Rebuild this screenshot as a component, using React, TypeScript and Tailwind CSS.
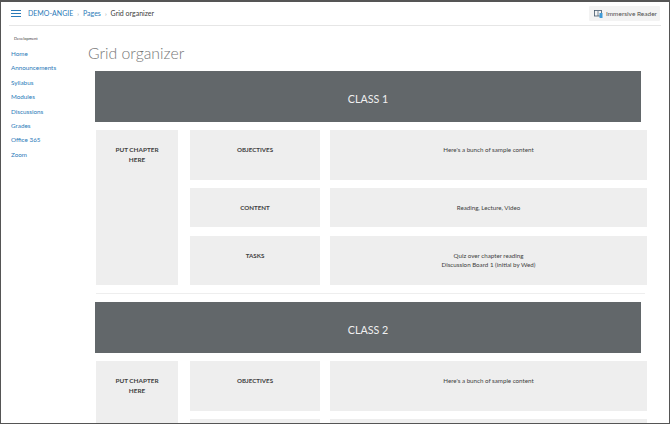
const navItems = ["Home", "Announcements", "Syllabus", "Modules", "Discussions", "Grades", "Office 365", "Zoom"]

function Row({ label, className, children }: { label: string; className: string; children: React.ReactNode }) {
  return (
    <div className={`flex gap-[10px] ${className}`}>
      <div className="w-[130px] bg-[#eeeeee] pt-[15px] text-center text-[6.2px] leading-[10px] font-bold text-[#404040]">{label}</div>
      <div className="w-[317px] bg-[#eeeeee] pt-[15px] text-center text-[6.2px] leading-[9px] text-[#404040]">{children}</div>
    </div>
  )
}

function ClassBlock({ title }: { title: string }) {
  return (
    <div>
      <div className="ml-[1px] flex h-[51px] w-[546px] items-center justify-center bg-[#62676a] pt-[6px] text-[10.7px] text-[#f0f0f0]">{title}</div>
      <div className="mt-[8px] ml-[2px] flex gap-[12px]">
        <div className="h-[155px] w-[82px] bg-[#eeeeee] pt-[15px] text-center text-[6.4px] leading-[10px] font-bold text-[#404040]">
          PUT CHAPTER
          <br />
          HERE
        </div>
        <div className="flex flex-col">
          <Row label="OBJECTIVES" className="h-[50px]">Here's a bunch of sample content</Row>
          <Row label="CONTENT" className="mt-[8px] h-[39px]">Reading, Lecture, Video</Row>
          <Row label="TASKS" className="mt-[9px] h-[49px]">
            <div>Quiz over chapter reading</div>
            <div>Discussion Board 1 (initial by Wed)</div>
          </Row>
        </div>
      </div>
    </div>
  )
}

export default function App() {
  return (
    <div className="h-[424px] w-[670px] overflow-hidden border-t-2 border-r border-b border-l border-[#555555] bg-white font-['Lato',sans-serif]">
      {/* top bar */}
      <div className="mx-[8px] flex h-[24px] items-center justify-between border-b border-[#e6e6e6] pr-[1px]">
        <div className="flex items-center text-[7px]">
          <svg width="10" height="7" viewBox="0 0 10 7" className="mr-[7px] ml-[2px]">
            <rect x="0" y="0" width="10" height="1" fill="#2a7ab8" />
            <rect x="0" y="3" width="10" height="1" fill="#2a7ab8" />
            <rect x="0" y="6" width="10" height="1" fill="#2a7ab8" />
          </svg>
          <span className="text-[#2a7ab8]">DEMO-ANGIE</span>
          <span className="mx-[4px] text-[6px] text-[#8b969e]">›</span>
          <span className="text-[#2a7ab8]">Pages</span>
          <span className="mx-[4px] text-[6px] text-[#8b969e]">›</span>
          <span className="text-[#404040]">Grid organizer</span>
        </div>
        <div className="flex h-[15px] w-[71px] items-center gap-[3px] rounded-[1px] bg-[#f3f3f3] pl-[5px] text-[6.5px] whitespace-nowrap text-[#505050]">
          <svg width="9" height="8" viewBox="0 0 9 8" fill="none">
            <rect x="0.5" y="0.5" width="7" height="5.5" stroke="#44586a" strokeWidth="0.8" />
            <path d="M4 1v5" stroke="#44586a" strokeWidth="0.7" />
            <path d="M5.5 3h3v5h-3z" fill="#3f9bd8" />
          </svg>
          Immersive Reader
        </div>
      </div>

      <div className="flex">
        {/* sidebar */}
        <div className="w-[87px] shrink-0 pt-[10px] pl-[10px]">
          <div className="mb-[5px] pl-[3px] text-[4px] leading-[6px] text-[#404040]">Development</div>
          <div className="flex flex-col">
            {navItems.map((item) => (
              <div key={item} className="h-[14.4px] text-[6.3px] leading-[14px] text-[#2a7ab8]">{item}</div>
            ))}
          </div>
        </div>

        {/* main */}
        <div className="min-w-0 flex-1">
          <div className="h-[45px] pt-[17px] text-[15.8px] leading-[20px] font-light text-[#777777]">Grid organizer</div>
          <div className="pl-[6px]">
            <ClassBlock title="CLASS 1" />
            <div className="mt-[8px] mb-[8px] ml-[2px] h-[1px] w-[549px] bg-[#eeeeee]" />
            <ClassBlock title="CLASS 2" />
          </div>
        </div>
      </div>
    </div>
  )
}
